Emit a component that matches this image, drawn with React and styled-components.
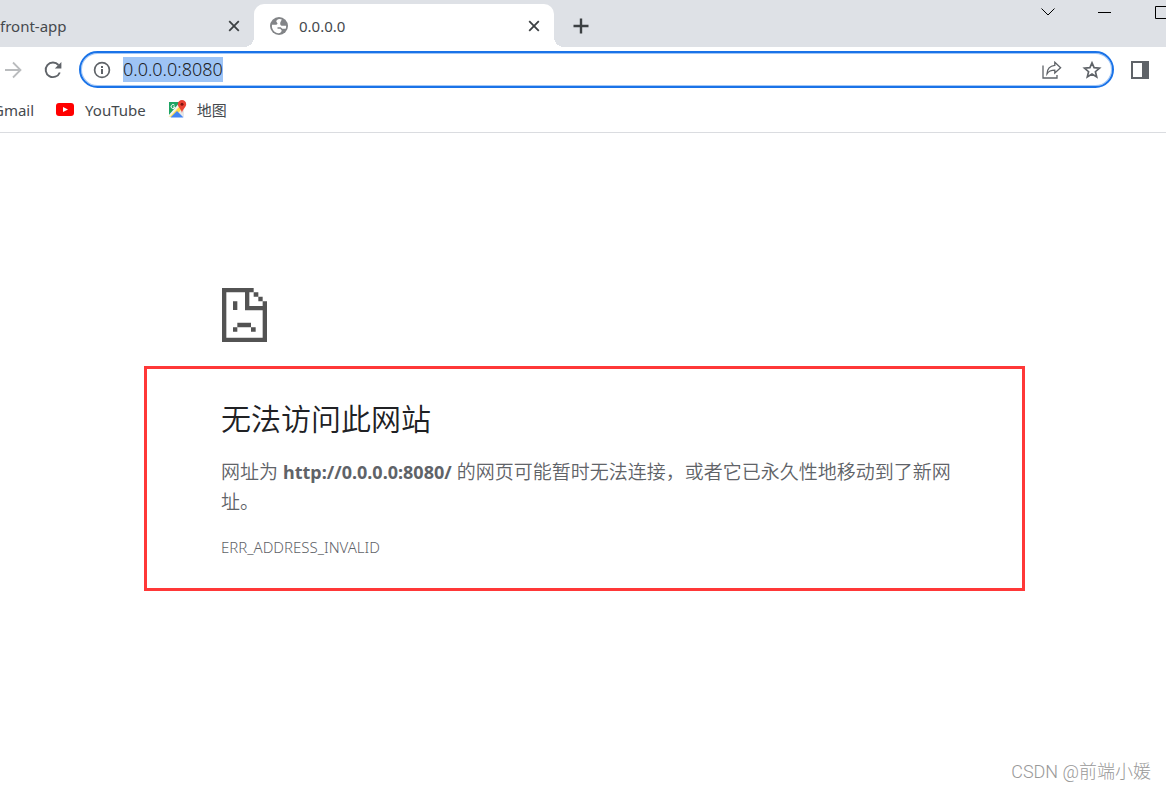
import React, { useEffect, useRef } from "react";
import styled, { createGlobalStyle } from "styled-components";

const GlobalStyle = createGlobalStyle`
  * {
    box-sizing: border-box;
  }

  body {
    margin: 0;
    background: #fff;
    color: #5f6368;
    font-family: "Noto Sans", "Noto Sans CJK SC", sans-serif;
    overflow: hidden;
  }

  button {
    display: flex;
    align-items: center;
    justify-content: center;
    flex-shrink: 0;
    padding: 0;
    border: 0;
    background: none;
    color: inherit;
    font: inherit;
  }

  svg {
    display: block;
    flex-shrink: 0;
  }
`;

const Browser = styled.div`
  position: relative;
  min-height: 100vh;
  overflow: hidden;
`;

const TabStrip = styled.div`
  display: flex;
  height: 47px;
  padding-top: 4px;
  background: #dee1e6;
`;

const Tab = styled.div`
  position: relative;
  display: flex;
  align-items: center;
  width: ${({ $active }) => ($active ? 300 : 254)}px;
  padding: 0 10px 0 ${({ $active }) => ($active ? 15 : 0)}px;
  gap: 10px;
  border-radius: 10px 10px 0 0;
  background: ${({ $active }) => ($active ? "#fff" : "transparent")};
  color: #45494d;
  font-size: 15px;

  /* curved feet of the selected tab */
  &::before,
  &::after {
    content: "";
    display: ${({ $active }) => ($active ? "block" : "none")};
    position: absolute;
    bottom: 0;
    width: 10px;
    height: 10px;
  }
  &::before {
    right: 100%;
    background: radial-gradient(circle at 0 0, transparent 10px, #fff 10px);
  }
  &::after {
    left: 100%;
    background: radial-gradient(circle at 100% 0, transparent 10px, #fff 10px);
  }
`;

const TabTitle = styled.span`
  flex: 1;
  white-space: nowrap;
`;

const TabClose = styled.button`
  width: 20px;
  height: 20px;
  color: #3c4043;
`;

const NewTab = styled.button`
  width: 34px;
  height: 43px;
  margin-left: 10px;
  color: #3c4043;
`;

const WindowControls = styled.div`
  display: flex;
  margin-left: auto;
  margin-right: -24px;
`;

const WindowButton = styled.button`
  width: 57px;
  height: 16px;
  color: #000;
`;

const Toolbar = styled.div`
  display: flex;
  align-items: center;
  height: 45px;
  padding-right: 16px;
`;

const ToolButton = styled.button`
  width: ${({ $width }) => $width || 40}px;
  height: 35px;
  color: ${({ disabled }) => (disabled ? "#babcbe" : "#5f6368")};
`;

const Omnibox = styled.form`
  display: flex;
  align-items: center;
  flex: 1;
  height: 37px;
  margin-right: 16px;
  padding-left: 12px;
  border: 2px solid #1a73e8;
  border-radius: 20px;
  box-shadow: inset 0 0 0 1px #a3c7f6;
`;

const SiteInfo = styled.button`
  width: 18px;
  height: 25px;
  margin-right: 12px;
  color: #5f6368;
`;

const Address = styled.input`
  flex: 1;
  min-width: 0;
  height: 25px;
  padding: 0;
  border: 0;
  outline: none;
  background: none;
  color: #202124;
  font-family: "Noto Sans", sans-serif;
  font-size: 18px;
  font-weight: 300;
  line-height: 25px;

  &::selection {
    background: rgba(157, 195, 245, 0.99);
    color: #202124;
  }
`;

const Bookmarks = styled.nav`
  display: flex;
  align-items: center;
  gap: 21px;
  height: 41px;
  margin-left: -7px;
  padding-bottom: 4px;
  border-bottom: 1px solid #dadce0;
`;

const Bookmark = styled.a`
  display: flex;
  align-items: center;
  gap: 10px;
  color: #45494d;
  font-size: 15px;
  line-height: 22px;
  text-decoration: none;
`;

const Page = styled.main`
  padding: 155px 141px 0 144px;
`;

const SadPage = styled.svg`
  margin-left: 78px;
  fill: #535353;
`;

const Notice = styled.section`
  max-width: 881px;
  margin-top: 24px;
  padding: 30px 60px 29px 74px;
  border: 3px solid #ff3838;
`;

const Title = styled.h1`
  margin: 0 0 18px;
  color: #202124;
  font-size: 30px;
  font-weight: 350;
  line-height: 40px;
`;

const Message = styled.p`
  margin: 0;
  font-size: 19px;
  font-weight: 350;
  line-height: 30px;

  strong {
    font-size: 18px;
    font-weight: 700;
  }
`;

const ErrorCode = styled.div`
  margin-top: 18px;
  font-size: 15px;
  font-weight: 300;
  line-height: 24px;
`;

const Watermark = styled.div`
  position: absolute;
  right: 15px;
  bottom: 6px;
  color: #999;
  font-family: Roboto, "Noto Sans CJK SC", sans-serif;
  font-size: 18px;
  font-weight: 300;
  line-height: 24px;
`;

const CloseIcon = () => (
  <svg width="12" height="12" viewBox="0 0 12 12" stroke="currentColor" strokeWidth="1.8">
    <path d="M1.200 1.200l9.600 9.600M10.800 1.200L1.200 10.800" />
  </svg>
);

const GlobeIcon = () => (
  <svg width="20" height="20" viewBox="0 0 20 20">
    <circle cx="10" cy="10" r="9" fill="#828487" />
    <path
      d="M10.800 3c-2.600.3-3.600 1.300-3.500 2.600.1 1 1.200 1 1.200 2 0 .9-1 1.200-2.200 1.200H3c-.6 3.600 1.400 7 5.200 8.200 1 .3 2 .3 3 .1.200-1.200 1.300-1.200 1.500-2.400 0-1-1.100-1.100-1.400-2H8.500v-1.500h3.200l1.600 1.500h3.400c.4-1 .5-2 .4-3h-3.400c-1.700 0-2.600-.9-2.500-2.300.1-1.600.9-2.400 1.600-3.900-.6-.3-1.300-.5-2-.5z"
      fill="#fff"
    />
    <path d="M4 10c1.600 0 2.500.6 3 1.800.5 1 1.600 1.200 2.200 2 .5.8.2 2-.6 2.700C5.400 16 3.600 13.500 4 10z" fill="#fff" />
  </svg>
);

const PlusIcon = () => (
  <svg width="16" height="16" viewBox="0 0 16 16" stroke="currentColor" strokeWidth="2.4">
    <path d="M8 .5v15M.5 8h15" />
  </svg>
);

const ForwardIcon = () => (
  <svg width="18" height="18" viewBox="0 0 18 18" fill="none" stroke="currentColor" strokeWidth="1.800">
    <path d="M1 9h15M9 1.500L16.500 9 9 16.500" />
  </svg>
);

const ReloadIcon = () => (
  <svg width="18" height="18" viewBox="0 0 18 18">
    <path
      d="M15.800 11.500A7.300 7.300 0 1 1 14.500 4"
      fill="none"
      stroke="currentColor"
      strokeWidth="1.900"
    />
    <path d="M17.400 1v6.600h-6.600z" fill="currentColor" />
  </svg>
);

const InfoIcon = () => (
  <svg width="18" height="18" viewBox="0 0 18 18">
    <circle cx="9" cy="9" r="7.400" fill="none" stroke="currentColor" strokeWidth="1.700" />
    <path d="M8 8h2v5H8zM8 5h2v2H8z" fill="currentColor" />
  </svg>
);

const ShareIcon = () => (
  <svg
    width="20"
    height="18"
    viewBox="0 0 20 18"
    fill="none"
    stroke="currentColor"
    strokeWidth="1.300"
  >
    <path d="M1 4.500V17h14v-3" />
    <path d="M12.800 1.300l5.800 5.400-5.800 5.300V9.200c-3.500 0-6 .8-7.800 3.600.2-4.800 3-8 7.800-8.500z" />
  </svg>
);

const StarIcon = () => (
  <svg width="20" height="20" viewBox="0 0 20 20" fill="none" stroke="currentColor" strokeWidth="1.700">
    <path d="M10 2.800l2.100 4.900 5.400.5-4.100 3.500 1.300 5.200-4.700-2.800-4.700 2.800 1.300-5.200-4.100-3.500 5.400-.5z" />
  </svg>
);

const SidePanelIcon = () => (
  <svg width="18" height="18" viewBox="0 0 18 18">
    <path d="M0 0h18v18H0zM2 2v14h9V2z" fill="currentColor" fillRule="evenodd" />
  </svg>
);

const YouTubeIcon = () => (
  <svg width="20" height="20" viewBox="0 0 20 20">
    <rect x="1" y="3" width="18" height="13" rx="3" fill="#f00" />
    <path d="M8 7l5 2.500L8 12z" fill="#fff" />
  </svg>
);

const MapsIcon = () => (
  <svg width="20" height="20" viewBox="0 0 20 20">
    <path d="M2 2h15v15H2z" fill="#e8e8e8" />
    <path d="M2 2h11L2 15z" fill="#1fa463" />
    <path d="M1.500 17L14 4l3 3L7 17z" fill="#ffd84a" />
    <path d="M3.500 17.500L10 11l6.500 6.500z" fill="#4285f4" />
    <path d="M1 16L13 3l1.500 1.500L2.500 17.500z" fill="#fff" opacity=".6" />
    <path d="M7.500 5.200A2 2 0 1 0 8 7H6" fill="none" stroke="#fff" strokeWidth="1" />
    <path d="M15 0A4.200 4.200 0 0 0 10.800 4.200c0 3.200 3.600 4.300 4.200 8.800.6-4.500 4.200-5.600 4.200-8.800A4.200 4.200 0 0 0 15 0z" fill="#ea4335" />
    <circle cx="15" cy="4.200" r="1.500" fill="#811411" />
  </svg>
);

const App = () => {
  const address = useRef(null);

  useEffect(() => {
    address.current.focus();
    address.current.select();
  }, []);

  return (
    <Browser>
      <GlobalStyle />
      <TabStrip>
        <Tab>
          <TabTitle>front-app</TabTitle>
          <TabClose type="button" aria-label="关闭 front-app">
            <CloseIcon />
          </TabClose>
        </Tab>
        <Tab $active>
          <GlobeIcon />
          <TabTitle>0.0.0.0</TabTitle>
          <TabClose type="button" aria-label="关闭 0.0.0.0">
            <CloseIcon />
          </TabClose>
        </Tab>
        <NewTab type="button" aria-label="新标签页">
          <PlusIcon />
        </NewTab>
        <WindowControls>
          <WindowButton type="button" aria-label="搜索标签页">
            <svg width="14" height="8" viewBox="0 0 14 8" fill="none" stroke="currentColor">
              <path d="M.5.500L7 7 13.500.5" />
            </svg>
          </WindowButton>
          <WindowButton type="button" aria-label="最小化">
            <svg width="13" height="13" viewBox="0 0 13 13" fill="currentColor">
              <path d="M0 6h13v1H0z" />
            </svg>
          </WindowButton>
          <WindowButton type="button" aria-label="最大化">
            <svg width="13" height="13" viewBox="0 0 13 13" fill="none" stroke="currentColor">
              <path d="M.5.500h12v12H.5z" />
            </svg>
          </WindowButton>
        </WindowControls>
      </TabStrip>

      <Toolbar>
        <ToolButton type="button" aria-label="前进" disabled $width={26}>
          <ForwardIcon />
        </ToolButton>
        <ToolButton type="button" aria-label="重新加载" $width={53}>
          <ReloadIcon />
        </ToolButton>
        <Omnibox onSubmit={(e) => e.preventDefault()}>
          <SiteInfo type="button" aria-label="网站信息">
            <InfoIcon />
          </SiteInfo>
          <Address ref={address} aria-label="地址栏" defaultValue="0.0.0.0:8080" />
          <ToolButton type="button" aria-label="分享">
            <ShareIcon />
          </ToolButton>
          <ToolButton type="button" aria-label="收藏">
            <StarIcon />
          </ToolButton>
        </Omnibox>
        <ToolButton type="button" aria-label="侧边栏" $width={20}>
          <SidePanelIcon />
        </ToolButton>
      </Toolbar>

      <Bookmarks>
        <Bookmark href="#gmail">Gmail</Bookmark>
        <Bookmark href="#youtube">
          <YouTubeIcon />
          YouTube
        </Bookmark>
        <Bookmark href="#maps">
          <MapsIcon />
          地图
        </Bookmark>
      </Bookmarks>

      <Page>
        <SadPage width="45" height="54" viewBox="0 0 135 162">
          <path d="M0 0h95v13H82v41h53v108H0zM13 13v136h109V67H69V13z" fillRule="evenodd" />
          <path d="M95 13h14v13H95zM109 26h13v14h-13zM122 40h13v14h-13z" />
          <path d="M33 40h13v26H33zM46 104h41v14H46zM33 118h13v13H33zM87 118h14v13H87z" />
        </SadPage>
        <Notice>
          <Title>无法访问此网站</Title>
          <Message>
            网址为 <strong>http://0.0.0.0:8080/</strong>{" "}
            的网页可能暂时无法连接，或者它已永久性地移动到了新网址。
          </Message>
          <ErrorCode>ERR_ADDRESS_INVALID</ErrorCode>
        </Notice>
      </Page>

      <Watermark>CSDN @前端小媛</Watermark>
    </Browser>
  );
};

export default App;
